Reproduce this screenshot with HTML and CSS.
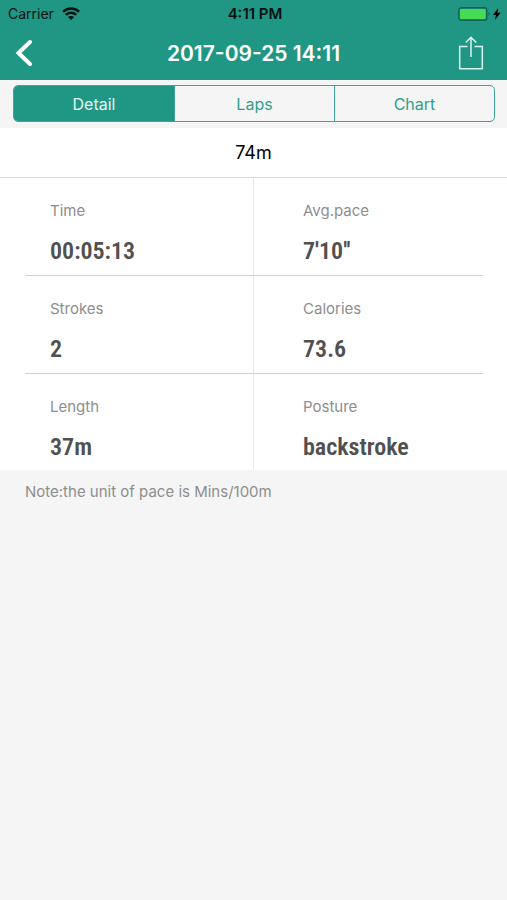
FILE: index.html
```html
<!DOCTYPE html>
<html lang="en">
<head>
<meta charset="utf-8">
<meta name="viewport" content="width=device-width, initial-scale=1">
<title>2017-09-25 14:11</title>
<link rel="stylesheet" href="styles.css">
</head>
<body>
<header class="header">
  <div class="status">
    <div class="status-left">
      <span>Carrier</span>
      <svg class="wifi" viewBox="0 0 18 13" aria-hidden="true">
        <path d="M1 4.800C5.600.4 12.400.4 17 4.800M3.800 7.900c3-2.800 7.400-2.800 10.400 0" fill="none" stroke="currentColor" stroke-width="2.500"/>
        <path d="M5.900 10c1.800-1.500 4.400-1.500 6.200 0L9 13z" fill="currentColor"/>
      </svg>
    </div>
    <span class="clock">4:11 PM</span>
    <div class="status-right">
      <svg class="battery" viewBox="0 0 44 14" aria-hidden="true">
        <rect x=".8" y=".8" width="28" height="12.400" rx="2.500" fill="none" stroke="#126257" stroke-width="1.400"/>
        <rect x="2" y="2" width="25.600" height="10" rx="1" fill="#45dc55"/>
        <path d="M30.500 5c1.600.3 1.600 3.700 0 4z" fill="#126257"/>
        <path d="M40.300 1l-5.300 7h3l-1.200 5 6-7.200h-3.300z" fill="#000"/>
      </svg>
    </div>
  </div>
  <div class="navbar">
    <button class="icon-button back" type="button" aria-label="Back">
      <svg class="back-icon" viewBox="0 0 18 28" aria-hidden="true"><path d="M15 3L3.500 14 15 25" fill="none" stroke="#fff" stroke-width="4" stroke-linecap="round" stroke-linejoin="miter"/></svg>
    </button>
    <h1 class="title">2017-09-25 14:11</h1>
    <button class="icon-button share" type="button" aria-label="Share">
      <svg class="share-icon" viewBox="0 0 26 36" aria-hidden="true"><path d="M9.500 11.500H1.700v22.300h22.600V11.500h-7.800M13 22V2.500M7.800 7.500L13 2.300l5.200 5.200" fill="none" stroke="#d8f5ef" stroke-width="1.500"/></svg>
    </button>
  </div>
</header>
<nav class="tabs" aria-label="Views">
  <div class="segments">
    <button class="segment active" type="button" aria-pressed="true">Detail</button>
    <button class="segment" type="button" aria-pressed="false">Laps</button>
    <button class="segment" type="button" aria-pressed="false">Chart</button>
  </div>
</nav>
<main>
  <h2 class="distance">74m</h2>
  <dl class="stats">
    <div class="stat"><dt>Time</dt><dd>00:05:13</dd></div>
    <div class="stat"><dt>Avg.pace</dt><dd>7'10''</dd></div>
    <div class="stat"><dt>Strokes</dt><dd>2</dd></div>
    <div class="stat"><dt>Calories</dt><dd>73.6</dd></div>
    <div class="stat"><dt>Length</dt><dd>37m</dd></div>
    <div class="stat"><dt>Posture</dt><dd>backstroke</dd></div>
  </dl>
  <p class="note">Note:the unit of pace is Mins/100m</p>
</main>
</body>
</html>
```
FILE: styles.css
```css
* {
  box-sizing: border-box;
}

body {
  margin: 0;
  min-height: 100vh;
  background: #f5f5f5;
  color: #000;
  font-family: Inter, "Liberation Sans", sans-serif;
}

button {
  padding: 0;
  border: 0;
  background: none;
  font: inherit;
}

svg {
  display: block;
}

.header {
  background: #209784;
}

.status,
.navbar {
  display: grid;
  grid-template-columns: 1fr auto 1fr;
  align-items: center;
}

.status {
  height: 27px;
  padding: 0 5px 0 8px;
  color: #03110f;
  font-size: 14px;
}

.status-left {
  display: flex;
  align-items: center;
  gap: 8px;
}

.wifi {
  width: 18px;
  height: 13px;
}

.clock {
  color: #03110f;
  font-size: 15px;
  font-weight: 600;
}

.status-right,
.share {
  justify-self: end;
}

.battery {
  width: 44px;
  height: 14px;
}

.navbar {
  height: 53px;
  padding: 0 23px 1px 15px;
}

.title {
  margin: 0 0 0 8px;
  color: #fff;
  font-size: 21px;
  font-weight: 600;
}

.back {
  justify-self: start;
}

.back-icon {
  width: 18px;
  height: 28px;
}

.share-icon {
  width: 26px;
  height: 36px;
}

.tabs {
  padding: 5px 12px 6px 13px;
}

.segments {
  display: grid;
  grid-template-columns: repeat(3, 1fr);
  overflow: hidden;
  height: 37px;
  border: 1px solid #40a594;
  border-radius: 5px;
}

.segment {
  color: #30a08e;
  font-size: 16px;
}

.segment + .segment {
  border-left: 1px solid #40a594;
}

.segment.active {
  background: #209784;
  color: #e2f8f3;
}

.distance {
  margin: 0;
  border-bottom: 1px solid #d9d9d9;
  background: #fff;
  font-size: 18px;
  font-weight: 400;
  line-height: 49px;
  text-align: center;
}

.stats {
  display: grid;
  grid-template-columns: 1fr 1fr;
  margin: 0;
  padding: 0 24px 0 25px;
  background: #fff;
}

.stat {
  padding: 22px 25px 7px;
  border-bottom: 1px solid #d2d2d2;
}

.stat:nth-child(odd) {
  border-right: 1px solid #e8e8e8;
}

.stat:nth-child(even) {
  padding-left: 49px;
}

.stat:nth-last-child(-n + 2) {
  padding-bottom: 6px;
  border-bottom: 0;
}

dt {
  color: #8e8e8e;
  font-size: 15px;
  line-height: 21px;
}

dd {
  margin: 14px 0 0;
  color: #505050;
  font-family: "Roboto Condensed", "Liberation Sans Narrow", sans-serif;
  font-size: 24px;
  font-weight: 600;
  line-height: 33px;
}

.note {
  margin: 0;
  padding: 11px 25px;
  color: #8e8e8e;
  font-size: 15px;
  line-height: 21px;
}
```
